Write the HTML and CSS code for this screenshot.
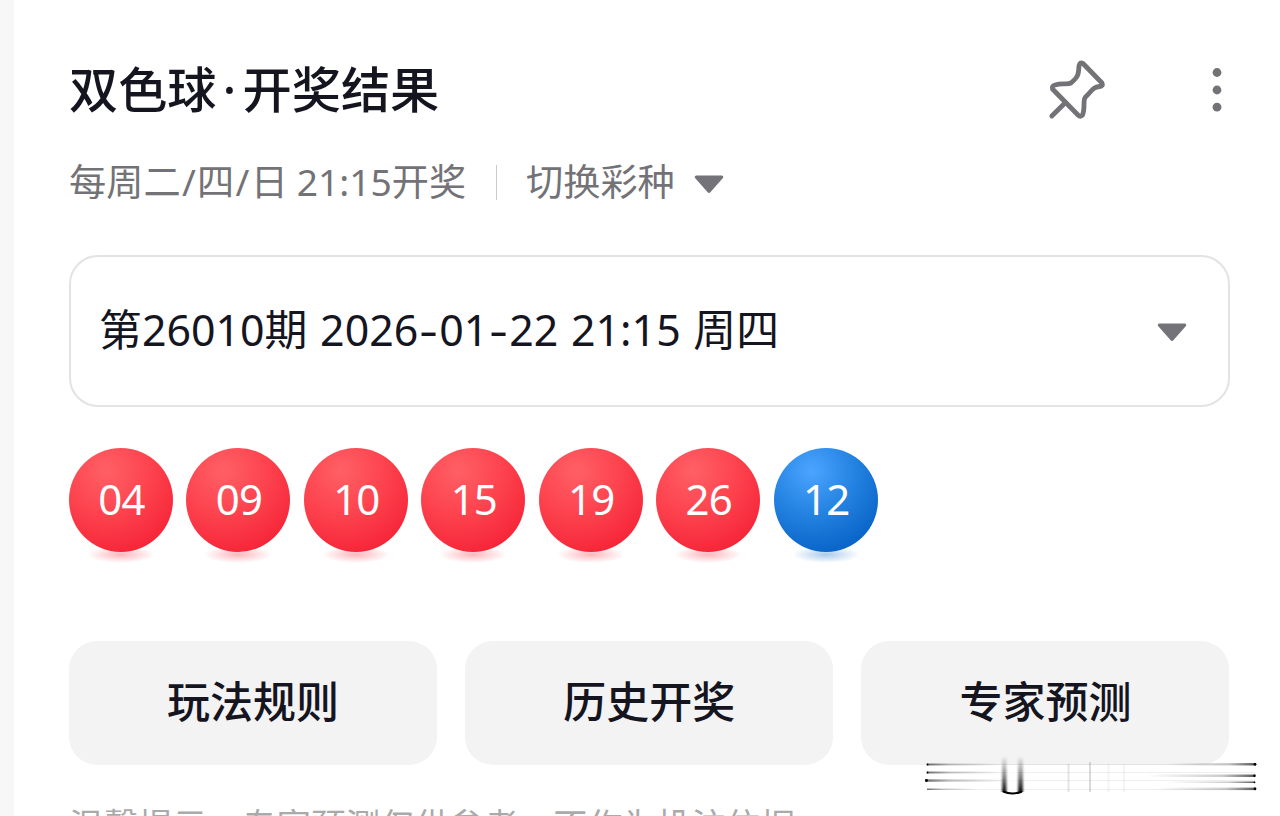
FILE: index.html
```html
<!DOCTYPE html>
<html lang="zh-CN">
<head>
    <meta charset="UTF-8">
    <meta name="viewport" content="width=device-width, initial-scale=1.0">
    <title>双色球·开奖结果</title>
    <link rel="stylesheet" href="styles.css">
</head>
<body>

    <div class="card">
        <div class="header">
            <h1>双色球<span class="dot">·</span>开奖结果</h1>
            <div class="actions">
                <svg class="pin" width="60" height="62" viewBox="0 0 60 62">
                    <path d="M36 5.5 L55 25 Q56.5 28 52.5 28.5 C45 29.5 46 32 38.5 39 C35.5 42 38.5 50 35.5 57 Q33.5 59.5 31 57 L5.5 31 Q4.5 28 8 27 C15 24.500 20 27 24 25 C31 19 31.500 17 32 8 Q33 3.500 36 5.500 Z"/>
                    <path d="M18.500 44.500 L4.800 58"/>
                </svg>
                <svg class="more" width="10" height="46" viewBox="0 0 10 46">
                    <circle cx="5" cy="5.500" r="4.400"/>
                    <circle cx="5" cy="23" r="4.400"/>
                    <circle cx="5" cy="40.200" r="4.400"/>
                </svg>
            </div>
        </div>

        <div class="sub">
            <span class="schedule">每周二<i>/</i>四<i>/</i>日 21:15开奖</span>
            <span class="line"></span>
            <span class="switch">切换彩种</span>
            <svg class="arrow" width="30" height="20" viewBox="0 0 30 20"><path d="M2.200 2 H27.800 L15 16.500 Z"/></svg>
        </div>

        <div class="select">
            <span class="period">第26010期 2026<i>-</i>01<i>-</i>22 21:15 周四</span>
            <svg class="arrow" width="30" height="20" viewBox="0 0 30 20"><path d="M2.200 2 H27.800 L15 16.500 Z"/></svg>
        </div>

        <div class="balls">
            <div class="ball">04</div>
            <div class="ball">09</div>
            <div class="ball">10</div>
            <div class="ball">15</div>
            <div class="ball">19</div>
            <div class="ball">26</div>
            <div class="ball blue">12</div>
        </div>

        <div class="buttons">
            <a class="button">玩法规则</a>
            <a class="button">历史开奖</a>
            <a class="button">专家预测</a>
        </div>

        <p class="tips">温馨提示：专家预测仅供参考，不作为投注依据</p>
    </div>

    <!-- Streaks in the bottom right corner -->
    <svg class="streaks" width="340" height="46" viewBox="0 0 340 46">
        <defs>
            <linearGradient id="left">
                <stop offset="0" stop-color="#000" stop-opacity=".55"/>
                <stop offset=".3" stop-color="#000" stop-opacity=".22"/>
                <stop offset="1" stop-color="#000" stop-opacity="0"/>
            </linearGradient>
            <linearGradient id="right">
                <stop offset="0" stop-color="#000" stop-opacity="0"/>
                <stop offset=".7" stop-color="#000" stop-opacity=".2"/>
                <stop offset="1" stop-color="#000" stop-opacity=".65"/>
            </linearGradient>
            <linearGradient id="down" x1="0" y1="0" x2="0" y2="1">
                <stop offset="0" stop-color="#000" stop-opacity="0"/>
                <stop offset=".6" stop-color="#000" stop-opacity=".5"/>
                <stop offset="1" stop-color="#000" stop-opacity=".95"/>
            </linearGradient>
            <filter id="soft" x="-50%" width="200%"><feGaussianBlur stdDeviation="1 0"/></filter>
        </defs>
        <rect x="8" y="16" width="316" height="24" fill="#fff" opacity=".5"/>
        <g fill="#000" opacity=".06">
            <rect x="7" y="14" width="328" height="1"/>
            <rect x="7" y="22" width="328" height="1"/>
            <rect x="7" y="30" width="328" height="1"/>
            <rect x="7" y="39" width="328" height="1"/>
        </g>
        <g fill="url(#left)">
            <rect x="7" y="13.500" width="75" height="2"/>
            <rect x="7" y="21.500" width="75" height="2"/>
            <rect x="5" y="29.300" width="80" height="2.500"/>
            <rect x="7" y="38.500" width="50" height="1.500"/>
        </g>
        <g fill="url(#right)">
            <rect x="246" y="13" width="90" height="2.500"/>
            <rect x="226" y="24.500" width="109" height="2.500"/>
            <rect x="246" y="31.500" width="89" height="1.500"/>
            <rect x="236" y="37.600" width="100" height="2.500"/>
        </g>
        <g fill="#000">
            <circle cx="7.500" cy="14.500" r="1"/>
            <circle cx="7.500" cy="22.500" r="1"/>
            <circle cx="6.500" cy="30.500" r="1.400"/>
            <circle cx="335" cy="14.300" r="1.400"/>
            <circle cx="334.500" cy="25.800" r="1.300"/>
            <circle cx="334.500" cy="32.300" r=".9"/>
            <circle cx="335" cy="38.800" r="1.400"/>
        </g>
        <rect x="86" y="16" width="12" height="26" fill="#fff" opacity=".7"/>
        <g fill="url(#down)" filter="url(#soft)">
            <rect x="82" y="6" width="4.500" height="36"/>
            <rect x="98" y="6" width="5" height="36"/>
        </g>
        <path d="M83 41.500 Q92.500 45.500 102 41.500" fill="none" stroke="#000" stroke-width="2"/>
        <g fill="#000">
            <rect x="147.500" y="14" width="2" height="28" opacity=".1"/>
            <rect x="169" y="12" width="2" height="30" opacity=".14"/>
            <rect x="187.500" y="14" width="2" height="28" opacity=".04"/>
            <rect x="203" y="14" width="2" height="28" opacity=".04"/>
        </g>
    </svg>

</body>
</html>
```
FILE: styles.css
```css
* {
    box-sizing: border-box;
}
body {
    font-family: "Noto Sans", "Noto Sans CJK SC", sans-serif;
    margin: 0;
    height: 816px;
    overflow: hidden;
    background-color: #f7f7f7;
    color: #15151f;
}
i {
    display: inline-block;
    font-style: normal;
    text-align: center;
}
.card {
    height: 816px;
    margin-left: 14px;
    padding: 50px 50.5px 0 55px;
    background-color: #fff;
    overflow: hidden;
}
.header {
    display: flex;
    justify-content: space-between;
    height: 80px;
}
h1 {
    margin: 0;
    font-size: 49.2px;
    font-weight: 500;
    line-height: 78px;
    white-space: nowrap;
}
.dot {
    display: inline-block;
    width: 26px;
    text-align: center;
}
.actions {
    display: flex;
    align-items: center;
    gap: 105px;
    padding-right: 7.5px;
}
.pin {
    fill: none;
    stroke: #737377;
    stroke-width: 4.8;
    stroke-linecap: round;
    stroke-linejoin: round;
    margin-bottom: 2px;
}
.more {
    fill: #737377;
}
.sub {
    display: flex;
    align-items: center;
    height: 50px;
    margin-top: 27px;
    font-size: 37.2px;
    line-height: 48px;
    color: #737377;
    white-space: nowrap;
}
.schedule {
    width: 427px;
    word-spacing: -1px;
}
.schedule i {
    width: 16.5px;
}
.line {
    width: 1px;
    height: 35px;
    background-color: #ccc;
}
.switch {
    margin: 0 19.5px 0 29px;
}
.arrow {
    margin-top: 5px;
    fill: #737379;
    stroke: #737379;
    stroke-width: 3;
    stroke-linejoin: round;
}
.select {
    display: flex;
    align-items: center;
    justify-content: space-between;
    height: 151.5px;
    margin-top: 48px;
    padding: 0 40.5px 0 28px;
    border: 2px solid #e3e3e5;
    border-radius: 29px;
    font-size: 42.9px;
    white-space: nowrap;
}
.period {
    height: 64px;
    line-height: 62px;
    word-spacing: 1.5px;
}
.period i {
    width: 21px;
    transform: scaleX(1.35);
}
.balls {
    position: relative;
    z-index: 0;
    display: flex;
    gap: 13.7px;
    margin-top: 41.5px;
}
.ball {
    position: relative;
    width: 103.8px;
    height: 103.8px;
    border-radius: 50%;
    background: radial-gradient(circle at 36% 22%, #ff6066 0%, #fd444f 40%, #f52236 85%);
    color: #fff;
    font-size: 42px;
    line-height: 102px;
    text-align: center;
    padding-left: 1px;
    letter-spacing: -0.8px;
}
.ball::after {
    content: "";
    position: absolute;
    left: 18px;
    top: 98px;
    width: 68px;
    height: 17px;
    border-radius: 50%;
    background: radial-gradient(closest-side, #f5223655, #f5223600);
    z-index: -1;
}
.ball.blue {
    background: radial-gradient(circle at 36% 22%, #4ba5ff 0%, #2583e2 40%, #0561c4 85%);
}
.ball.blue::after {
    background: radial-gradient(closest-side, #0561c455, #0561c400);
}
.buttons {
    display: grid;
    grid-template-columns: repeat(3, 1fr);
    gap: 28px;
    margin-top: 89.5px;
}
.button {
    height: 124px;
    border-radius: 28px;
    background-color: #f3f3f3;
    font-size: 43px;
    font-weight: 500;
    line-height: 122px;
    text-align: center;
}
.tips {
    margin: 35px 0 0;
    font-size: 34.6px;
    line-height: 50px;
    color: #aaa;
    white-space: nowrap;
}
.streaks {
    position: absolute;
    left: 920px;
    top: 750px;
}
```
